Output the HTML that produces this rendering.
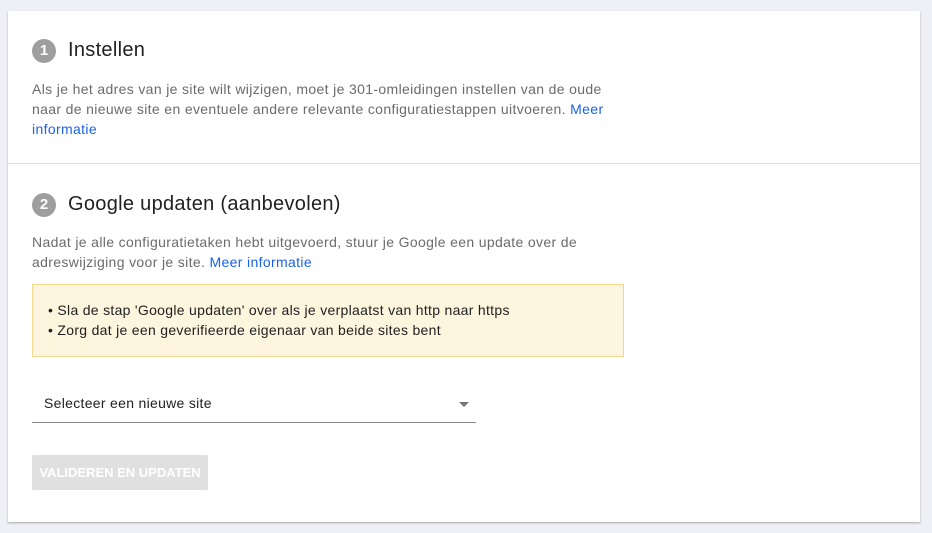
<!DOCTYPE html>
<html><head><style>
body{margin:0;width:932px;height:533px;background:#eef0f5;font-family:"Liberation Sans",Arial,sans-serif;position:relative;overflow:hidden}
.card{position:absolute;left:8px;top:11px;width:912px;height:511px;background:#fff;box-shadow:0 1px 2px rgba(0,0,0,.3)}
.num{position:absolute;width:24px;height:24px;border-radius:50%;background:#9e9e9e;color:#fff;font-weight:bold;font-size:15px;text-align:center;line-height:24px}
.h{position:absolute;font-size:20px;color:#212121;letter-spacing:0.3px}
.p{position:absolute;font-size:14px;line-height:20px;color:#6b6b6b;width:640px;letter-spacing:0.35px;white-space:nowrap}
a{color:#1a63e8;text-decoration:none}
.div{position:absolute;left:0;right:0;top:152px;height:1px;background:#ddd}
.box{position:absolute;left:24px;top:273px;width:592px;height:73px;box-sizing:border-box;background:#fef5df;border:1px solid #f4d88d;font-size:14px;line-height:20px;color:#212121;padding:15px 0 0 15px;letter-spacing:0.3px}
.sel{position:absolute;left:24px;top:380px;width:444px;height:31px;border-bottom:1px solid #8a8a8a;font-size:14px;color:#212121;letter-spacing:0.3px}
.btn{position:absolute;left:24px;top:444px;width:176px;height:35px;background:#e0e0e0;border-radius:2px;color:#fff;font-weight:bold;font-size:13px;text-align:center;line-height:35px}
</style></head><body>
<div class="card">
<div class="num" style="left:24px;top:28px">1</div>
<div class="h" style="left:60px;top:28px">Instellen</div>
<div class="p" style="left:24px;top:68px">Als je het adres van je site wilt wijzigen, moet je 301-omleidingen instellen van de oude<br>naar de nieuwe site en eventuele andere relevante configuratiestappen uitvoeren. <a>Meer</a><br><a>informatie</a></div>
<div class="div"></div>
<div class="num" style="left:24px;top:182px">2</div>
<div class="h" style="left:60px;top:182px">Google updaten (aanbevolen)</div>
<div class="p" style="left:24px;top:221px">Nadat je alle configuratietaken hebt uitgevoerd, stuur je Google een update over de<br>adreswijziging voor je site. <a>Meer informatie</a></div>
<div class="box">• Sla de stap 'Google updaten' over als je verplaatst van http naar https<br>• Zorg dat je een geverifieerde eigenaar van beide sites bent</div>
<div class="sel"><span style="position:absolute;left:12px;top:4px">Selecteer een nieuwe site</span><span style="position:absolute;right:7px;top:11px;width:0;height:0;border-left:5px solid transparent;border-right:5px solid transparent;border-top:5px solid #757575"></span></div>
<div class="btn">VALIDEREN EN UPDATEN</div>
</div>
</body></html>
